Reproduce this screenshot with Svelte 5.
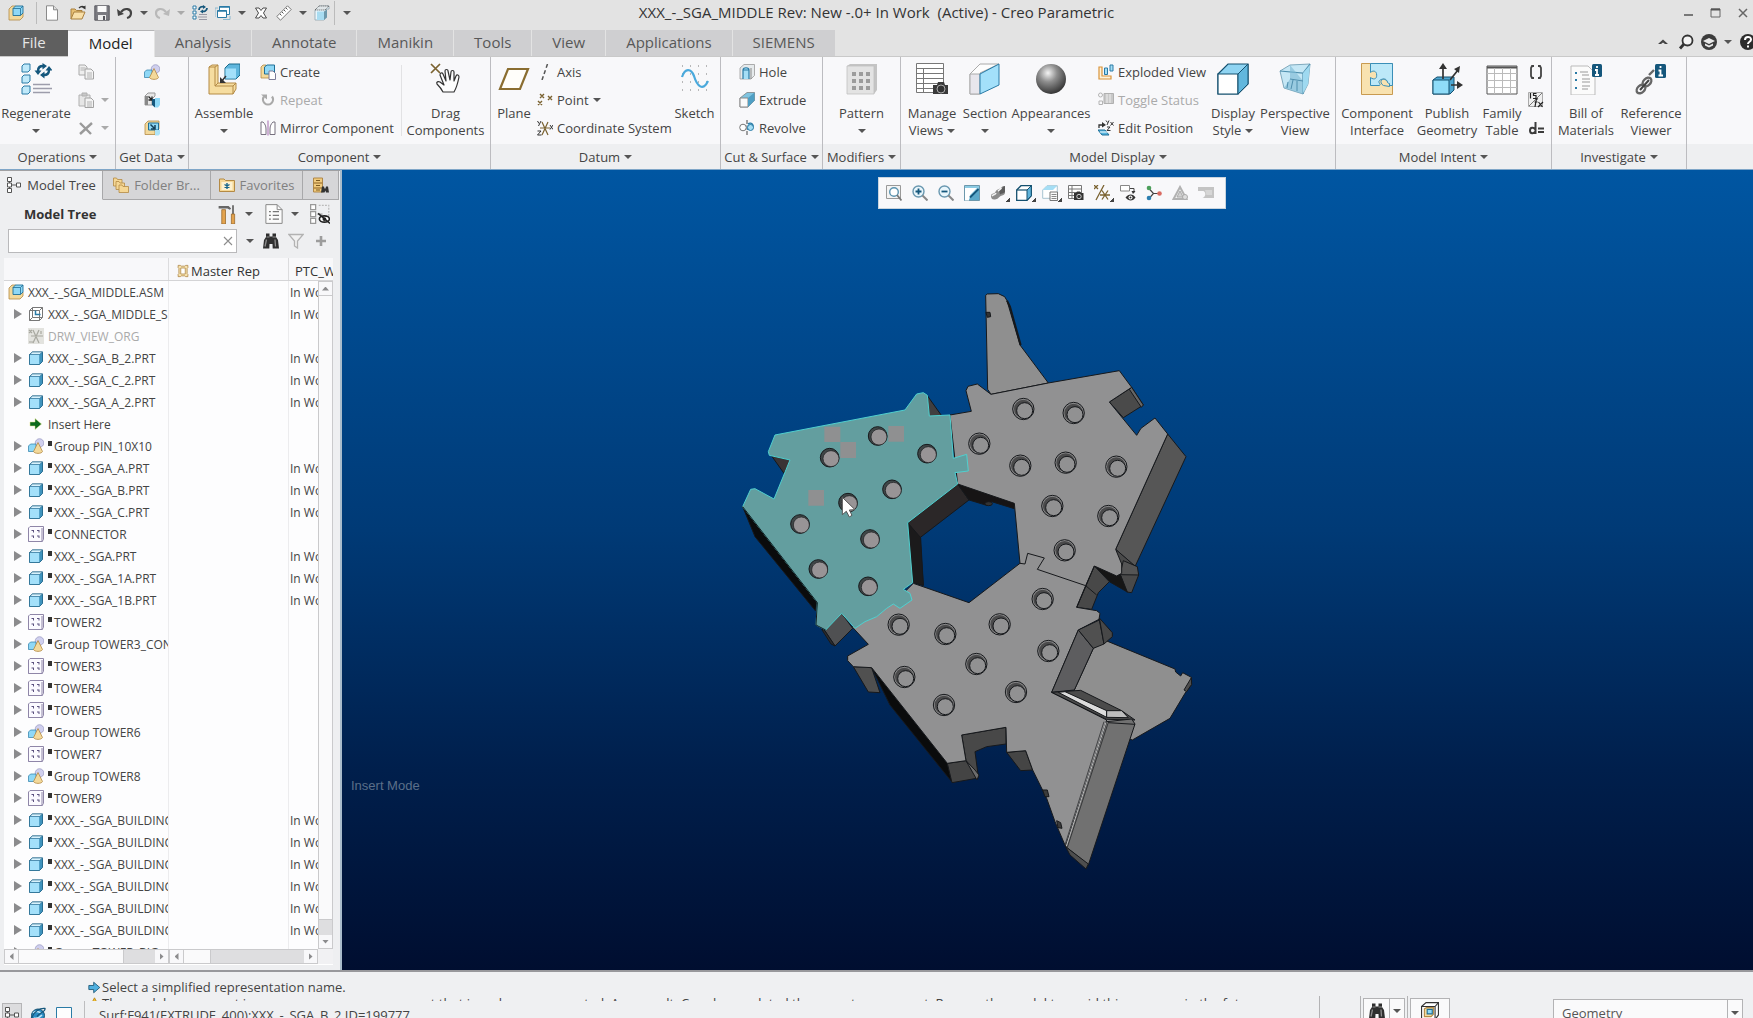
<script>
  /** CAD assembly window: ribbon, model tree, graphics area and status bar. */

  const icons = {
    // quick access + window
    asm: `<path d="M1 4l3-3h4v7h7v4l-3 3H1z" fill="#f3d99b" stroke="#b48a45" stroke-width=".8"/><path d="M5 3.500l2.500-2.500H15v7l-2.500 2.500H5z" fill="#8fd8f6" stroke="#1f6f97" stroke-width=".9"/><path d="M5 3.500h7.500V10.500M12.500 3.500L15 1" fill="none" stroke="#1f6f97" stroke-width=".8"/>`,
    newfile: `<path d="M2.500 .8h7l4 4v10.400h-11z" fill="#fff" stroke="#8b8b8b"/><path d="M9.500 .8v4h4" fill="#ddd" stroke="#8b8b8b"/>`,
    open: `<path d="M1 14V4h4l1.500 1.500H12V8" fill="#e7bf73" stroke="#a9803f"/><path d="M1 14l3-7h11l-3 7z" fill="#f8dfa8" stroke="#a9803f"/><path d="M9 3c2-2 3-2 5-1" fill="none" stroke="#333" stroke-width="1.300"/><path d="M15.500 .5v4l-3.500-2z" fill="#333"/>`,
    save: `<path d="M.8.8h14.400v14.400H.8z" fill="#7a7a80" stroke="#5c5c62"/><path d="M3.500 1h9v6h-9z" fill="#fafafa"/><path d="M4 10h8v5H4z" fill="#ededed"/><path d="M9 11h2v4H9z" fill="#55555c"/>`,
    undo: `<path d="M4 7c4-5 10-3 10 1 0 3-2 4.500-4 5" fill="none" stroke="#444" stroke-width="2.200"/><path d="M0 4l1 7 6-2z" fill="#444"/>`,
    redo: `<path d="M12 7C8 2 2 4 2 8c0 3 2 4.500 4 5" fill="none" stroke="#b9b9b9" stroke-width="2.200"/><path d="M16 4l-1 7-6-2z" fill="#b9b9b9"/>`,
    regenSmall: `<g fill="#fff" stroke="#2a7ba6"><path d="M1 1h3v3H1zM1 6h3v3H1zM1 11h3v3H1z"/></g><path d="M7 9.500h8M6 12h9M7 14.500h8" stroke="#9797a3"/><path d="M7 5c0-3 3-4 5-3M15 3c0 3-3 4-5 3" fill="none" stroke="#15577c" stroke-width="1.800"/><path d="M11 0l3 2-3 2zM11 4.500l-3 2 3 2z" fill="#15577c"/>`,
    windows: `<path d="M4.500 1.500h10v8h-10z" fill="#fff" stroke="#2a7ba6"/><path d="M2.500 5.500h9v7h-9z" fill="#fff" stroke="#2a7ba6"/><path d="M2.500 6h9M4.500 2h10" stroke="#2a7ba6" stroke-width="1.600"/><path d="M8 14.500h7V11M0 3h3M0 3v9" fill="none" stroke="#8cb8cf"/>`,
    closeWin: `<path d="M2.500 3h3.500l2 2.500L10 3h3.500L10.500 8l3 5H10l-2-2.500L6 13H2.500l3-5z" fill="#fff" stroke="#4a4a4a"/>`,
    ruler: `<path d="M.8 11.500L11.500.8l3.700 3.700L4.500 15.200z" fill="#fff" stroke="#777"/><path d="M4 9l1.500 1.500M6 7l1.500 1.500M8 5l1.500 1.500M10 3l1.500 1.500" stroke="#555"/>`,
    cubeDark: `<path d="M1 5l4-4h10v3h-3v7l-2 4H1z" fill="#e9f6fc" stroke="#8fa3ad" stroke-width=".8"/><path d="M1 5l4-4h10l-4 4z" fill="#dfe5e8" stroke="#555" stroke-dasharray="1"/><path d="M3 6.500h7V15H3z" fill="#a8dcf1"/><path d="M10 6.500l3-2v8L10 15z" fill="#6d98ab"/>`,
    min: `<path d="M3 10h9" stroke="#555" stroke-width="1.500"/>`,
    max: `<path d="M3 4h9v8H3z" fill="none" stroke="#666"/><path d="M3 4.500h9" stroke="#555" stroke-width="2"/>`,
    close: `<path d="M4 4l8 8M12 4l-8 8" stroke="#666" stroke-width="1.500"/>`,
    chevUp: `<path d="M3 10l5-4.500L13 10h-3L8 8.500 6 10z" fill="#444"/>`,
    search: `<circle cx="9.500" cy="6.500" r="5" fill="#f4f4f4" stroke="#333" stroke-width="1.800"/><path d="M6 10l-4 4.500" stroke="#333" stroke-width="2.800"/>`,
    learn: `<circle cx="8" cy="8" r="8" fill="#3c3c3c"/><path d="M2 7l6-3 6 3-6 3z" fill="#e8e8e8"/><path d="M4 9.500l4 2 4-2v2l-4 2-4-2z" fill="#e8e8e8"/>`,
    help: `<circle cx="8" cy="8" r="8" fill="#2c2c2c"/><path d="M5 6c0-4 6-4 6-.5 0 2.500-3 2-3 4.500M8 11.500v2" fill="none" stroke="#fff" stroke-width="2"/>`,
    // small ribbon icons
    copy: `<path d="M1 1h6l2 2v8H1z" fill="#eee" stroke="#aaa"/><path d="M7 5h6l2.500 2.500V15H7z" fill="#f3f3f3" stroke="#a2a2a2"/><path d="M2.500 4h5M2.500 6h4M9 9h5M9 11h5M9 13h5" stroke="#b2b2b2"/>`,
    paste: `<path d="M1 3h11v11H1z" fill="#e6e6e6" stroke="#b0b0b0"/><path d="M4 1h5v3H4z" fill="#c8c8c8" stroke="#b0b0b0"/><path d="M7 6h6l2.500 2.500V15.500H7z" fill="#f3f3f3" stroke="#a2a2a2"/><path d="M9 10h5M9 12h5M9 14h5" stroke="#b2b2b2"/>`,
    del: `<path d="M2 3l11 11M14 3L2 14" stroke="#9a9a9a" stroke-width="2.400"/>`,
    group: `<circle cx="11.500" cy="5" r="4.300" fill="#cfcfee" stroke="#8c8cb8" stroke-width=".6"/><path d="M.5 8l2-2H8v6l-1.500 1.500h-6z" fill="#8fd8f6" stroke="#2a7ba6" stroke-width=".7"/><path d="M10 4.500l4.500 9c-1 2.500-8 2.500-9 0z" fill="#f3d99b" stroke="#b48a45" stroke-width=".8"/>`,
    copyGeom: `<path d="M1 4l3-3h7v3l-3 3v6H1z" fill="#e6e6e6" stroke="#999"/><path d="M1 4h3v9H1z" fill="#888"/><path d="M4.500 4.500l3 3M8 4.500v3.500H4.500" fill="none" stroke="#222" stroke-width="1.300"/><path d="M8 7h3v8.500L8 13z" fill="#15577c"/><path d="M11 6h5v7l-2 2.500h-3z" fill="#8fd8f6"/>`,
    shrink: `<path d="M1 4l3-3h11v8h-4v5.500H1z" fill="#f3d99b" stroke="#b48a45" stroke-width=".8"/><path d="M4.500 3h10v7h-10z" fill="#8fd8f6" stroke="#1f6f97"/><path d="M6.500 4.500l4 4M11 5v4H7" fill="none" stroke="#143f58" stroke-width="1.500"/><path d="M11 10h5v4l-1.500 1.500H11z" fill="#aee3f7"/>`,
    create: `<path d="M1 3l2-2h3v7h7v4l-2 2H1z" fill="#f3d99b" stroke="#b48a45" stroke-width=".8"/><path d="M4.500 3L7 1h7.500v7L12 10H4.500z" fill="#8fd8f6" stroke="#1f6f97"/><path d="M9 7h4l2.500 2.500v6H9z" fill="#fff" stroke="#7d7d99"/>`,
    repeat: `<path d="M12 4.500a5 5 0 1 1-8 0" fill="none" stroke="#a9a9a9" stroke-width="2.200"/><path d="M1 2.500h6v5z" fill="#a9a9a9"/>`,
    mirror: `<path d="M1 14.500V2h2c2 2 3 4 3 7v5.500zM15 14.500V2h-2c-2 2-3 4-3 7v5.500z" fill="#fff" stroke="#77707f"/><path d="M8 .5v15" stroke="#a56bb0"/>`,
    axis: `<path d="M10.500 0L5 16" stroke="#555" stroke-width="1.500" stroke-dasharray="4 2.500"/>`,
    point: `<g stroke="#7a6230" stroke-width="1.400"><path d="M3 2l4 4M7 2L3 6M11 4l4 4M15 4l-4 4M1 9l4 4M5 9l-4 4"/></g>`,
    csys: `<path d="M3 8h10M5 15l6-13M5 2l6 13" stroke="#7a6230" stroke-width="1.200"/><path d="M.5 1l1.500 2.500M4 1L1.500 6M13 5l3 4.500M16 5l-3 4.500M.5 11h3.500l-3.500 4h4" fill="none" stroke="#333"/>`,
    hole: `<path d="M1 4l4-3.500h10.500v11L12 15H1z" fill="#e6eaec" stroke="#999" stroke-width=".8"/><path d="M4 15V6c0-3 6-3 6 0v9M4 6h6" fill="#a5def5" stroke="#2a7ba6" stroke-width="1.200"/><path d="M12 4v11" stroke="#888"/>`,
    extrude: `<path d="M1 6l7-5.500h7.500v8L9 15H1z" fill="#7fc4e0" stroke="#777" stroke-width=".7"/><path d="M1 6h8v9H1z" fill="#fafafa" stroke="#888"/><path d="M9 6l6.500-5.500v8L9 15z" fill="#4f9fc4"/>`,
    revolve: `<path d="M8 0v16" stroke="#444" stroke-dasharray="4 1.500"/><ellipse cx="4" cy="7.500" rx="3.300" ry="3.300" fill="#fff" stroke="#777"/><path d="M8 9h4a3 3 0 1 0-3-5" fill="#8fd8f6" stroke="#2a7ba6" stroke-width="1.400"/><circle cx="11.500" cy="7.500" r="3" fill="#a5def5" stroke="#2a7ba6"/>`,
    exploded: `<path d="M1 3h3v9h9v3H1z" fill="#fff3da" stroke="#d9943a" stroke-width="1.200"/><path d="M6.500 4h3v6.500h-3zM12 1h3v6h-3z" fill="#a5def5" stroke="#2a7ba6"/>`,
    toggle: `<circle cx="2.500" cy="3" r="2" fill="none" stroke="#b4b4b4"/><path d="M1 9h3.500v3.500H1z" fill="none" stroke="#b4b4b4"/><path d="M6 1.500h9.500v10H6z" fill="#c8c8c8" stroke="#b0b0b0"/><path d="M9 2v9M12 2v9" stroke="#eee"/>`,
    editpos: `<path d="M1 8V5h4" fill="none" stroke="#333" stroke-width="1.300"/><path d="M4 2l4 3-4 2.500z" fill="#333"/><path d="M8 .5l1.500 2M11 .5L9 5M12.500 2l3 3.500M15.500 2l-3 3.500M9 7h3l-3 3.500h3.500" fill="none" stroke="#333"/><path d="M0 10h7l4 5H4z" fill="#55b4de" stroke="#1f6f97"/><path d="M2 12h8" stroke="#fff"/>`,
    braces: `<path d="M6 2H4L3 4v8l1 2h2M10 2h2l1 2v8l-1 2h-2" fill="none" stroke="#444" stroke-width="1.800"/>`,
    relations: `<path d="M.5.5h14v14H.5z" fill="#efefef" stroke="#aaa"/><path d="M1 14L14 1" stroke="#777"/><path d="M2.500 1v5.500M8.500 1.500H5.500v2h2.500v3H5M10 7c-2-1-2 2-3 8M6.500 10h3M10.500 10l4 5M15 10l-5 5" fill="none" stroke="#222" stroke-width="1.200"/>`,
    params: `<path d="M7.500 2v12M7 9.500c-1-2.500-5-2.500-5 1s4 3.500 5 1M10 8.500h6M10 12h6" fill="none" stroke="#3c3c3c" stroke-width="2"/>`,
    // tree
    prt: `<path d="M1.500 4.500l3-2.500h10v9.500l-3 3h-10z" fill="#3f93bd" stroke="#1c6288" stroke-width=".9"/><path d="M1.500 4.500l3-2.500h10l-3 2.500z" fill="#d9f2fc" stroke="#1c6288" stroke-width=".6"/><path d="M1.900 4.900h9.300v9.200H1.900z" fill="#a3e0fa"/>`,
    skel: `<path d="M1.500 4.500l3-3h10v10l-3 3h-10zM4.500 1.500v10h10M1.500 14.500l3-3M11.500 4.500l3-3M1.500 4.500h10v10" fill="#fff" stroke="#777"/><path d="M7.500 4.500v4h5" fill="none" stroke="#2a7ba6" stroke-width="1.500"/>`,
    csysGrey: `<path d="M0 0h16v16H0z" fill="#e3e3df"/><path d="M3 8h12M5 15l6-13M5 2l6 13M1 2l3 3M4 2l-3 3M13 3v3M1 14h4" stroke="#a8a8a0" stroke-width="1.200"/>`,
    insert: `<path d="M2 6h5V2.500L13.500 8 7 13.500V10H2z" fill="#0d6b1d" stroke="#e5e58a" stroke-width=".5"/>`,
    patt: `<path d="M.5 2L2 .5h13.500v13L14 15.500H.5z" fill="#fbfaff" stroke="#8f86a8"/><path d="M14 2v13.500M.5 15.500h14" stroke="#8f86a8"/><g fill="#5c5280"><path d="M3.500 4h2.500v2.500H5V5H3.500zM9 4h2.500v2.500h-1V5H9zM3.500 9.500H6V12H5v-1.500H3.500zM9 9.500h2.500V12h-1v-1.500H9z"/></g>`,
    treeTab: `<path d="M1.500 .5h4v4h-4zM1.500 6h4v4h-4zM1.500 11.500h4v4h-4zM10.500 6h4v4h-4z" fill="#fff" stroke="#555"/><path d="M6 8h4M3.500 4.500V6M3.500 10v1.500" stroke="#555"/>`,
    folders: `<g fill="#f5d795" stroke="#b48a45" stroke-width=".8"><path d="M.5 9V1h3l1 1.500H9V9z"/><path d="M3 12.500V4.500h3l1 1.500h4.500v6.500z"/><path d="M6 15.500V8h3l1 1.500h5.500v6z"/></g>`,
    fav: `<path d="M.5 14.500V2h4.500l1.500 1.500h9v11z" fill="#f5d795" stroke="#b48a45"/><path d="M2.500 5h11v8h-11z" fill="#fdf1d0"/><path d="M8 6v6M5.500 7.500l5 3M10.500 7.500l-5 3" stroke="#14648c" stroke-width="1.400"/>`,
    findTab: `<path d="M.5 1h9v5h-9zM.5 6h9v5h-9zM.5 11h9v4h-9z" fill="#f0ca7c" stroke="#a9803f" stroke-width=".9"/><path d="M3 3.500h4M3 8.500h4M3 13h4" stroke="#7d5a20"/><path d="M8 15.500l1-6h2l.5 2h1l.5-2h2l1 6h-3l-.5-2-1 2z" fill="#333"/>`,
    tools: `<path d="M.5 1.500h8l2 2-1 1-2-1H.5z" fill="#666"/><path d="M3 4.500h3V16H3z" fill="#e3a34e" stroke="#96672a" stroke-width=".6"/><path d="M12 1v7" stroke="#777" stroke-width="1.600"/><path d="M10.700 8h2.600v8h-2.600z" fill="#e3a34e" stroke="#96672a" stroke-width=".6"/>`,
    sheet: `<path d="M1.500 .5h9l4 4v11h-13z" fill="#fbfbfb" stroke="#8a8a8a" stroke-width=".8"/><path d="M10.500 .5v4h4" fill="none" stroke="#8a8a8a" stroke-width=".8"/><path d="M4 6h1.500M4 9h1.500M4 12h1.500M7 6h5M7 9h5M7 12h5" stroke="#777"/>`,
    hideTree: `<path d="M.5.5h4v4h-4zM.5 6h4v4h-4zM.5 11.500h4v4h-4zM6 8h4" fill="#fff" stroke="#999"/><path d="M7 1h8v9" fill="none" stroke="#bbb" stroke-dasharray="1.500 1"/><ellipse cx="11.500" cy="12" rx="4" ry="2.500" fill="#fff" stroke="#222" stroke-width="1.300"/><circle cx="11.500" cy="12" r="1.500" fill="#222"/><path d="M6.500 7.500l9.500 8" stroke="#222" stroke-width="1.200"/>`,
    binoc: `<path d="M3 .5h3.500v3h3v-3H13V4l2 3 1 8.500h-6.300L9.500 11h-3l-.2 4.500H0L1 7l2-3z" fill="#2f2f2f"/><path d="M3.500 6.500L2 13.500M12 6.500l.5 7" stroke="#8d8d8d" stroke-width="1.300"/><path d="M3.500 4h3M9.500 4H13" stroke="#aaa" stroke-width=".8"/>`,
    funnel: `<path d="M.8 1.500h14.400L9.500 8v7l-3-2V8z" fill="#f1f1f1" stroke="#b2b2b2" stroke-width="1.300"/>`,
    plus: `<path d="M8 3v10M3 8h10" stroke="#9c9c9c" stroke-width="2.600"/>`,
    x: `<path d="M4 4l8 8M12 4l-8 8" stroke="#8d8d8d" stroke-width="1.100"/>`,
    rep: `<path d="M1.500 .5h3l1 1h5l1-1h3v3l-1 1v7l1 1v3h-3l-1-1h-5l-1 1h-3v-3l1-1v-7l-1-1z" fill="#f7e2ae" stroke="#a9803f"/><path d="M5 4h6v8H5z" fill="#fff" stroke="#a9803f"/>`,
    // graphics toolbar
    refit: `<path d="M.5.5h14v13H.5z" fill="#f4f4f4" stroke="#999"/><circle cx="8" cy="7" r="4.300" fill="#fff" stroke="#5a93b0" stroke-width="1.400"/><path d="M11 10l4.500 5.500" stroke="#777" stroke-width="1.800"/>`,
    zoomIn: `<circle cx="6.500" cy="6.500" r="5.500" fill="#e9f6fc" stroke="#6a98b0" stroke-width="1.400"/><path d="M3.500 6.500h6M6.500 3.500v6" stroke="#15577c" stroke-width="1.800"/><path d="M10.500 10.500l5 5" stroke="#888" stroke-width="2"/>`,
    zoomOut: `<circle cx="6.500" cy="6.500" r="5.500" fill="#e9f6fc" stroke="#6a98b0" stroke-width="1.400"/><path d="M3.500 6.500h6" stroke="#15577c" stroke-width="1.800"/><path d="M10.500 10.500l5 5" stroke="#888" stroke-width="2"/>`,
    repaint: `<path d="M.5 .5h15v15H.5z" fill="#8ccbe3" stroke="#6d98ac"/><path d="M1 3h12L6 10l-1 5.500H1z" fill="#fff"/><path d="M15 3c-3 7-6 5-10 12h10z" fill="#5ba8c9"/><path d="M14.500 4L6 12.500" stroke="#15577c" stroke-width="1.800"/>`,
    shade: `<path d="M1 11c0-3 3-2 4-3.500S6 5 9 4s2-3 6-3v7c-1 3-3 2-5 3.500S8 14 5 14.500 1 13 1 11z" fill="#8c8c8c"/><path d="M9 5c3-.5 3-3 6-4v6c-2 2-3 1-5 2.500z" fill="#5c5c5c"/><path d="M2 11c2-2 3-1 4-3M8 6c2-1 2-2 3.500-3" stroke="#f2f2f2" stroke-width="1.600" fill="none"/>`,
    cube: `<path d="M.7 5L5 .7h10.300v10L11 15.300H.7z" fill="#fff" stroke="#14506f" stroke-width="1.300"/><path d="M11 5L15.300.7v10L11 15.300z" fill="#5fb3da" stroke="#14506f"/><path d="M.7 5H11" stroke="#14506f" stroke-width="1.200"/>`,
    saved: `<path d="M.7 5L5 .7h10.300v8L11 13.300H.7z" fill="#fff" stroke="#a8c4d0"/><path d="M.7 5L5 .7h10.300L11 5z" fill="#a5def5"/><path d="M8 7h7.500v8.500H8z" fill="#fafafa" stroke="#777"/><path d="M9.500 9.500h5M9.500 11.500h5M9.500 13.500h5" stroke="#888"/>`,
    viewMgr: `<path d="M.5.5h13v13H.5zM.5 4h13M.5 7.500h13M.5 10.500h13M4 .5v13" fill="#fff" stroke="#777"/><path d="M6 8h2l1-1.500h3L13 8h2.500v7H6z" fill="#333"/><circle cx="11" cy="11.500" r="2.200" fill="#333" stroke="#ccc"/>`,
    datums: `<g stroke="#7a6230" stroke-width="1.300"><path d="M0 0l4 4M4 0L0 4M10 0L2 15M6 10h10M8 14.500l6-9M8 5.500l6 9"/></g>`,
    annot: `<path d="M.5 .5h9v5.500h-9z" fill="#fff" stroke="#888"/><path d="M10 3.500h4v4" fill="none" stroke="#444"/><path d="M11.500 6h4L13 9z" fill="#333"/><path d="M5.500 12.500c3-4 7.500-4 10 0-2.500 4-7 4-10 0z" fill="#333"/><circle cx="10.500" cy="12.500" r="2" fill="#fff"/><circle cx="10.500" cy="12.500" r="1" fill="#333"/>`,
    spin: `<path d="M2.500 3l5 5.500L3 13.500M7.500 8.500h6" fill="none" stroke="#444" stroke-width="1.200"/><circle cx="3" cy="3" r="2.300" fill="#4c9f5b"/><circle cx="3" cy="13" r="2.300" fill="#2c7fb0"/><circle cx="13.500" cy="8.500" r="2.300" fill="#d96a62"/>`,
    tri: `<path d="M8 2l6.500 12H1.500z" fill="#eee" stroke="#b2b2b2" stroke-width="2"/><path d="M8 6l3 6H5z" fill="#d2d2d2" stroke="#aaa"/><circle cx="13" cy="12" r="2.500" fill="#ddd" stroke="#aaa"/>`,
    flag: `<path d="M0 2h16v11H4.500c3-1 4-5 1-7H0z" fill="#c4c4c4"/><path d="M7 5h7v5H8.500z" fill="#d6d6d6"/>`,
    // status
    arrow: `<path d="M1 5.500h6V1.500L14.500 8 7 14.500v-4H1z" fill="#4fb0e0" stroke="#14506f"/>`,
    warn: `<path d="M8 1l7.500 14H.5z" fill="#f6c42c" stroke="#b27d10"/><path d="M8 5v5M8 11.500V13" stroke="#222" stroke-width="1.600"/>`,
    globe: `<circle cx="8" cy="8.500" r="6.500" fill="#2a8cc4" stroke="#14506f"/><path d="M3 6c3-3 6-1 8 0M4 11c3 1 5 0 8-3" fill="none" stroke="#bfe6f8" stroke-width="1.500"/><path d="M1 12C4 4 10 1 15 1.500c1 3-4 3-8 8" fill="none" stroke="#15577c" stroke-width="1.300"/>`,
    blank: `<path d="M.5.5h15v13H.5z" fill="#fdfdfd" stroke="#2a7ba6"/>`,
    box3d: `<path d="M.5 4l4-3.500h11v11l-3 4H.5z" fill="#fff" stroke="#333"/><path d="M.5 4h12v11M12.500 4l3-3.500" fill="none" stroke="#333"/><path d="M3 6l2-1h6v6l-2 2H3z" fill="#f3d99b" stroke="#b48a45"/><path d="M5.500 6.500h4.500v4H5.500z" fill="#8fd8f6" stroke="#1f6f97"/>`,
  };

  const bigIcons = {
    regen: `<g fill="#bfe9fa" stroke="#2a7ba6"><path d="M2 3l2-2h6v6L8 9H2zM2 14l2-2h6v6l-2 2H2zM2 25l2-2h6v6l-2 2H2z"/></g><path d="M13 21.500h17M13 25.500h19M13 29.500h17" stroke="#9d9dab" stroke-width="1.500"/><path d="M18 8c0-4 2-5 5-5M29 7c0 4-2 5-5 5" fill="none" stroke="#15577c" stroke-width="2.400"/><path d="M22.500 0l4.500 3-4.500 3.500zM24.500 8.500L20 12l4.500 3.500z" fill="#15577c"/><path d="M14.500 7.500h7L18 12zM25.500 7.500h7L29 3z" fill="#15577c"/>`,
    assemble: `<path d="M1 4l3-2h6v18h14l4 0v6l-3 5H1z" fill="#f6dda0" stroke="#b48a45"/><path d="M1 4h6v19h18v8M7 4l3-2M7 23l3-3M25 23l3-3" fill="none" stroke="#b48a45"/><path d="M17 5l4-4h11v11l-4 4H17z" fill="#5fb6dd" stroke="#1c6b8c"/><path d="M17.500 5.500H28v10H17.500z" fill="#a3e0fa"/><path d="M18 13l-5 6" stroke="#333" stroke-width="1.400"/><path d="M12 14v6h6z" fill="#333"/>`,
    drag: `<path d="M1 1l9 9M10 1l-9 9" stroke="#7a6230" stroke-width="1.700"/><path d="M13 29c-2-4-4-6-6-8-1-2 1-3 3-2l4 3-4-10c0-2 2-3 3-1l3 7-1-10c0-2 3-2 3 0l2 9 1-8c0-2 3-2 3 0v9l2-5c1-2 3-1 3 1-1 5-2 10-5 15z" fill="#fdfdfd" stroke="#333" stroke-width="1.200" stroke-linejoin="round"/>`,
    plane: `<path d="M10 6h20l-8 20H2z" fill="#fffefa" stroke="#8a6d30" stroke-width="2.200"/>`,
    sketch: `<path d="M3 3h26M3 11h26M3 19h26M3 27h26" stroke="#777" stroke-dasharray="1 7"/><path d="M3 14c3-9 9-9 12-1 3 10 9 16 14 5" fill="none" stroke="#4aa9dc" stroke-width="2.200"/>`,
    pattern: `<path d="M1 3l3-2h27v26l-3 4H1z" fill="#c4c4c4"/><path d="M1 3h27v28H1z" fill="#e3e3e3" stroke="#c0c0c0" stroke-width=".8"/><g fill="#9c9c9c"><path d="M6 9h4v4H6zM13 9h4v4h-4zM20 9h4v4h-4zM6 16h4v4H6zM13 16h4v4h-4zM20 16h4v4h-4zM6 23h4v4H6zM13 23h4v4h-4zM20 23h4v4h-4z"/></g>`,
    manage: `<path d="M.5 .5h27v29H.5zM.5 5.500h27M.5 10.500h27M.5 15.500h27M.5 20.500h27M.5 25.500h27M7.500 5v25" fill="#fff" stroke="#777"/><path d="M17 22h4l1-3h6l1 3h3v9H17z" fill="#3a3a3a"/><circle cx="25" cy="26" r="4" fill="#333" stroke="#aaa"/>`,
    section: `<path d="M1 11l10-10h19l-19 9v21H1z" fill="#fdfdfd" stroke="#aaa"/><path d="M1 11h10v20H1z" fill="#e8e6ec" stroke="#aaa"/><path d="M11 11l19-10v21L11 31z" fill="#a3e0fa" stroke="#2a7ba6"/>`,
    appear: `<circle cx="16" cy="16" r="15" fill="url(#ball)"/>`,
    display: `<path d="M1 11L11 1h20v20L21 31H1z" fill="#8fd4f2" stroke="#14506f" stroke-width="1.200"/><path d="M1 11h20v20H1z" fill="#fff" stroke="#14506f" stroke-width="1.200"/><path d="M21 11L31 1v20L21 31z" fill="#62b7dd" stroke="#14506f"/>`,
    persp: `<path d="M1 8l10-6 20-1-2 20-5 10-19-6z" fill="#c5e7f5" stroke="#7fa9bd"/><path d="M1 8l23 2 7-9M24 10v21" fill="none" stroke="#4f8fae" stroke-width="1.200"/><path d="M11 2v14L5 25l19 6V18z" fill="#7cb9d3" opacity=".6"/><path d="M24 10l7-8-2 19-5 9z" fill="#9ed9f0"/><path d="M11 16l13 2M9 19l-1 6M14 17l-2 9M18 18v10" stroke="#4f8fae"/>`,
    iface: `<path d="M.5.500h31v31H.5z" fill="#f8e2b0" stroke="#c89a50"/><path d="M9.500.5h22v22h-5c1-7-4-8-8-5-2 2 2 4 0 5h-9v-8c4 3 7 1 6-4-1-3-4-3-6-1z" fill="#bce8f8" stroke="#3a8fb8"/><path d="M22.500 22.500c-4-2-3-7 1-6s2 4 5 4v3z" fill="#f8e2b0" stroke="#3a8fb8"/>`,
    publish: `<path d="M2 17l4-3h17v13l-4 4H2z" fill="#4fa8d2" stroke="#14506f"/><path d="M2 17h16v14H2z" fill="#8fdcf8" stroke="#14506f"/><path d="M12 16V4M19 17l8-10M20 22h9" stroke="#333" stroke-width="1.700"/><path d="M12 0l4 6H8zM29 3l-1 7-5-4zM32 22l-6 4v-8z" fill="#333"/>`,
    family: `<path d="M1 3h30v28H1z" fill="#fff" stroke="#555"/><path d="M1 4.500h30" stroke="#555" stroke-width="2"/><path d="M1 10.500h30M1 17.500h30M1 24.500h30M8.500 5v26M16.500 5v26M24.500 5v26" stroke="#bbb"/>`,
    bom: `<path d="M1 3h17l7 7v22H1z" fill="#fbfbfb" stroke="#bbb"/><path d="M5 10h2M5 17h2M5 25h2" stroke="#2a7ba6" stroke-width="2"/><path d="M10 9h8M12 12h7M12 16h8M12 19h8M12 23h8M12 26h6" stroke="#999"/><rect x="22" y="1" width="10" height="13" rx="1.500" fill="#15577c"/><path d="M27 3v2M25 7h2v5M25 12h4" fill="none" stroke="#fff" stroke-width="1.800"/>`,
    refview: `<g fill="none" stroke="#666" stroke-width="2.400"><ellipse cx="6" cy="26" rx="5" ry="3.500" transform="rotate(-45 6 26)"/><ellipse cx="12" cy="19" rx="5" ry="3.500" transform="rotate(-45 12 19)"/><path d="M14 12l5-5"/></g><path d="M5 27l9-10" stroke="#444" stroke-width="2"/><rect x="20" y="1" width="11" height="14" rx="1.500" fill="#15577c"/><path d="M25.500 3v2M23.500 7.500h2v5M23.500 12.500h4.500" fill="none" stroke="#fff" stroke-width="1.800"/>`,
  };

  const quick = [
    { icon: "newfile", label: "New" },
    { icon: "open", label: "Open" },
    { icon: "save", label: "Save" },
    { icon: "undo", label: "Undo", menu: true },
    { icon: "redo", label: "Redo", menu: true, off: true },
    { icon: "regenSmall", label: "Regenerate" },
    { icon: "windows", label: "Windows", menu: true },
    { icon: "closeWin", label: "Close window" },
    { icon: "ruler", label: "Measure", menu: true },
    { icon: "cubeDark", label: "Display" },
  ];

  const tabs = ["File", "Model", "Analysis", "Annotate", "Manikin", "Tools", "View", "Applications", "SIEMENS"];

  // each group body is a row of big buttons ({big}) and stacks of small ones ({list})
  const groups = [
    {
      name: "Operations",
      cls: "operations",
      items: [
        { big: "regen", lines: ["Regenerate"], menu: true },
        {
          list: [
            { icon: "copy", title: "Copy", off: true },
            { icon: "paste", title: "Paste", menu: true, off: true },
            { icon: "del", title: "Delete", menu: true, off: true },
          ],
        },
      ],
    },
    {
      name: "Get Data",
      cls: "get-data",
      items: [
        {
          list: [
            { icon: "group", title: "User-Defined Feature" },
            { icon: "copyGeom", title: "Copy Geometry" },
            { icon: "shrink", title: "Shrinkwrap" },
          ],
        },
      ],
    },
    {
      name: "Component",
      cls: "component",
      items: [
        { big: "assemble", lines: ["Assemble"], menu: true },
        {
          list: [
            { icon: "create", text: "Create" },
            { icon: "repeat", text: "Repeat", off: true },
            { icon: "mirror", text: "Mirror Component" },
          ],
        },
        { big: "drag", lines: ["Drag", "Components"], ruled: true },
      ],
    },
    {
      name: "Datum",
      cls: "datum",
      items: [
        { big: "plane", lines: ["Plane"] },
        {
          list: [
            { icon: "axis", text: "Axis" },
            { icon: "point", text: "Point", menu: true },
            { icon: "csys", text: "Coordinate System" },
          ],
        },
        { big: "sketch", lines: ["Sketch"] },
      ],
    },
    {
      name: "Cut & Surface",
      cls: "cut",
      items: [
        {
          list: [
            { icon: "hole", text: "Hole" },
            { icon: "extrude", text: "Extrude" },
            { icon: "revolve", text: "Revolve" },
          ],
        },
      ],
    },
    { name: "Modifiers", cls: "modifiers", items: [{ big: "pattern", lines: ["Pattern"], menu: true }] },
    {
      name: "Model Display",
      cls: "model-display",
      items: [
        { big: "manage", lines: ["Manage", "Views"], menu: true },
        { big: "section", lines: ["Section"], menu: true },
        { big: "appear", lines: ["Appearances"], menu: true },
        {
          list: [
            { icon: "exploded", text: "Exploded View" },
            { icon: "toggle", text: "Toggle Status", off: true },
            { icon: "editpos", text: "Edit Position" },
          ],
        },
        { big: "display", lines: ["Display", "Style"], menu: true },
        { big: "persp", lines: ["Perspective", "View"] },
      ],
    },
    {
      name: "Model Intent",
      cls: "intent",
      items: [
        { big: "iface", lines: ["Component", "Interface"] },
        { big: "publish", lines: ["Publish", "Geometry"] },
        { big: "family", lines: ["Family", "Table"] },
        {
          list: [
            { icon: "braces", title: "Parameters" },
            { icon: "relations", title: "Relations" },
            { icon: "params", title: "Switch Dimensions" },
          ],
        },
      ],
    },
    {
      name: "Investigate",
      cls: "investigate",
      items: [
        { big: "bom", lines: ["Bill of", "Materials"] },
        { big: "refview", lines: ["Reference", "Viewer"] },
      ],
    },
  ];

  const part = (name, mark = true) => ({ name, icon: "prt", mark, work: true });
  const patt = (name) => ({ name, icon: "patt", mark: true });
  const grp = (name) => ({ name: `Group ${name}`, icon: "group", mark: true });

  const rows = [
    { name: "XXX_-_SGA_MIDDLE.ASM", icon: "asm", root: true, work: true },
    { name: "XXX_-_SGA_MIDDLE_SKEL.PRT", icon: "skel", work: true },
    { name: "DRW_VIEW_ORG", icon: "csysGrey", leaf: true, off: true },
    part("XXX_-_SGA_B_2.PRT", false),
    part("XXX_-_SGA_C_2.PRT", false),
    part("XXX_-_SGA_A_2.PRT", false),
    { name: "Insert Here", icon: "insert", leaf: true },
    grp("PIN_10X10"),
    part("XXX_-_SGA_A.PRT"),
    part("XXX_-_SGA_B.PRT"),
    part("XXX_-_SGA_C.PRT"),
    patt("CONNECTOR"),
    part("XXX_-_SGA.PRT"),
    part("XXX_-_SGA_1A.PRT"),
    part("XXX_-_SGA_1B.PRT"),
    patt("TOWER2"),
    grp("TOWER3_CON"),
    patt("TOWER3"),
    patt("TOWER4"),
    patt("TOWER5"),
    grp("TOWER6"),
    patt("TOWER7"),
    grp("TOWER8"),
    patt("TOWER9"),
    ...Array.from({ length: 6 }, () => part("XXX_-_SGA_BUILDING")),
    grp("TOWER_BIG"),
  ];

  const viewTools = [
    ["refit", "Refit"], ["zoomIn", "Zoom In"], ["zoomOut", "Zoom Out"], ["repaint", "Repaint"],
    ["shade", "Rendering", true], ["cube", "Display Style", true], ["saved", "Saved Orientations", true],
    ["viewMgr", "View Manager"], ["datums", "Datum Display", true], ["annot", "Annotation Display"],
    ["spin", "Spin Center"], ["tri", "Simulate"], ["flag", "Pause"],
  ];

  const holes = [
    [880, 387], [1031, 399], [748, 491], [871, 557], [1007, 548], [1159, 560], [967, 678], [1135, 708], [1004, 811],
    [938, 957], [506, 1034], [646, 1062], [809, 1033], [955, 1113], [739, 1152], [523, 1191], [858, 1236], [642, 1275],
  ];
  const pickedHoles = [
    [443, 468], [299, 533], [591, 521], [486, 628], [354, 668], [210, 732], [420, 777], [265, 867], [414, 919],
  ];

  let active = $state("Model");
  let query = $state("");
</script>

{#snippet icon(name)}
  <svg class="ico" viewBox="0 0 16 16" aria-hidden="true">{@html icons[name]}</svg>
{/snippet}

{#snippet caret()}<i class="caret"></i>{/snippet}

<div class="window">
  <header class="titlebar">
    <div class="quick">
      <span class="logo">{@render icon("asm")}</span>
      {#each quick as q}
        <button type="button" class:off={q.off} class:menu={q.menu} aria-label={q.label}>
          {@render icon(q.icon)}
          {#if q.menu}{@render caret()}{/if}
        </button>
      {/each}
      <button type="button" class="more" aria-label="Customize">{@render caret()}</button>
    </div>
    <h1>XXX_-_SGA_MIDDLE Rev: New -.0+ In Work &nbsp;(Active) - Creo Parametric</h1>
    <div class="win-buttons">
      <button type="button" aria-label="Minimize">{@render icon("min")}</button>
      <button type="button" aria-label="Maximize">{@render icon("max")}</button>
      <button type="button" aria-label="Close">{@render icon("close")}</button>
    </div>
  </header>

  <nav class="tabs">
    {#each tabs as tab}
      <button type="button" class:file={tab === "File"} class:active={active === tab} onclick={() => (active = tab)}>{tab}</button>
    {/each}
    <div class="helpers">
      <button type="button" aria-label="Collapse ribbon">{@render icon("chevUp")}</button>
      <button type="button" aria-label="Search">{@render icon("search")}</button>
      <button type="button" class="learn" aria-label="Learning">{@render icon("learn")}{@render caret()}</button>
      <button type="button" aria-label="Help">{@render icon("help")}</button>
    </div>
  </nav>

  <section class="ribbon" aria-label="Ribbon">
    {#each groups as g}
      <div class="group {g.cls}">
        <div class="body">
          {#each g.items as item}
            {#if item.big}
              <button type="button" class="big" class:ruled={item.ruled}>
                <svg viewBox="0 0 32 32" aria-hidden="true">
                  {#if item.big === "appear"}
                    <defs>
                      <radialGradient id="ball" cx=".4" cy=".3" r=".75">
                        <stop offset="0" stop-color="#f4f4f4" />
                        <stop offset=".4" stop-color="#8e8e8e" />
                        <stop offset="1" stop-color="#2c2c2c" />
                      </radialGradient>
                    </defs>
                  {/if}
                  {@html bigIcons[item.big]}
                </svg>
                <span>{item.lines[0]}</span>
                <span>{item.lines[1] ?? ""}{#if item.menu}{@render caret()}{/if}</span>
              </button>
            {:else}
              <div class="list">
                {#each item.list as it}
                  <button type="button" class="small" class:off={it.off} aria-label={it.title}>
                    {@render icon(it.icon)}
                    {#if it.text}<span>{it.text}</span>{/if}
                    {#if it.menu}{@render caret()}{/if}
                  </button>
                {/each}
              </div>
            {/if}
          {/each}
        </div>
        <button type="button" class="group-name">{g.name}{@render caret()}</button>
      </div>
    {/each}
  </section>

  <main>
    <aside>
      <div class="side-tabs">
        <button type="button" class="active">{@render icon("treeTab")}Model Tree</button>
        <button type="button">{@render icon("folders")}Folder Br...</button>
        <button type="button">{@render icon("fav")}Favorites</button>
        <button type="button" aria-label="Search tool">{@render icon("findTab")}</button>
      </div>
      <div class="side-head">
        <h2>Model Tree</h2>
        <button type="button" aria-label="Settings">{@render icon("tools")}{@render caret()}</button>
        <button type="button" aria-label="Show">{@render icon("sheet")}{@render caret()}</button>
        <button type="button" aria-label="Hide tree">{@render icon("hideTree")}</button>
      </div>
      <div class="filter">
        <div class="field">
          <input type="text" aria-label="Filter tree" bind:value={query} />
          <button type="button" aria-label="Clear" onclick={() => (query = "")}>{@render icon("x")}</button>
        </div>
        <button type="button" aria-label="History">{@render caret()}</button>
        <button type="button" aria-label="Find">{@render icon("binoc")}</button>
        <button type="button" aria-label="Filter">{@render icon("funnel")}</button>
        <button type="button" aria-label="Add">{@render icon("plus")}</button>
      </div>
      <div class="tree">
        <div class="tree-clip">
          <table>
            <thead>
              <tr>
                <th aria-label="Name"></th>
                <th>{@render icon("rep")}Master Rep</th>
                <th>PTC_WM</th>
              </tr>
            </thead>
            <tbody>
              {#each rows as row}
                <tr class:off={row.off}>
                  <td>
                    <div class="node" class:root={row.root}>
                      {#if !row.root}
                        <button type="button" class="expander" class:leaf={row.leaf} aria-label="Expand" disabled={row.leaf}></button>
                      {/if}
                      {@render icon(row.icon)}
                      {#if row.mark}<i class="mark"></i>{/if}
                      <span>{row.name}</span>
                    </div>
                  </td>
                  <td></td>
                  <td>{row.work ? "In Work" : ""}</td>
                </tr>
              {/each}
            </tbody>
          </table>
          <div class="vscroll">
            <button type="button" class="arrow up" aria-label="Scroll up"></button>
            <div class="thumb"></div>
            <div class="track"></div>
            <button type="button" class="arrow down" aria-label="Scroll down"></button>
          </div>
        </div>
        <div class="hscrolls">
          <div class="hscroll names">
            <button type="button" class="arrow left" aria-label="Scroll left"></button>
            <div class="thumb"></div>
            <div class="track"></div>
            <button type="button" class="arrow right" aria-label="Scroll right"></button>
          </div>
          <div class="hscroll cols">
            <button type="button" class="arrow left" aria-label="Scroll left"></button>
            <div class="thumb"></div>
            <div class="track"></div>
            <button type="button" class="arrow right" aria-label="Scroll right"></button>
          </div>
        </div>
      </div>
    </aside>

    <section class="graphics" aria-label="Graphics area">
      <div class="view-tools">
        {#each viewTools as [name, label, more]}
          <button type="button" class:more aria-label={label}>{@render icon(name)}</button>
        {/each}
      </div>
      <svg class="scene" viewBox="342 170 1411 800" aria-hidden="true">
        <g transform="translate(730 280) scale(.33333)" stroke="#16181b" stroke-width="3" stroke-linejoin="round">
          <!-- side walls -->
          <g fill="#0a0b0c">
            <path d="M38 680L262 968 256 992 75 770Z" />
            <path d="M425 1163L652 1450 666 1506 480 1275Z" />
            <path d="M125 528L184 540 162 580Z" fill="#3a3435" />
            <path d="M592 347L634 406 592 412Z" fill="#413f40" />
            <path d="M683 612L717 660 570 773 580 916 548 908 533 728Z" fill="#2b2728" />
            <path d="M533 728L572 773 580 916 548 908Z" fill="#1b1a1b" />
            <path d="M683 612L853 668V686L785 665 770 676 717 660Z" fill="#161415" />
          </g>
          <ellipse cx="776" cy="671" rx="11" ry="6" fill="#333" />
          <path d="M1128 1082L1335 1167 1337 1176 1352 1188 1358 1178 1384 1192 1384 1215 1365 1240 1320 1315 1207 1380 1000 1300 1033 1230 1090 1105Z" fill="#8f8f8f" />
          <path d="M1384 1193L1385 1213 1370 1235 1362 1230Z" fill="#4e4e4e" />
          <path d="M1313 462L1368 530 1215 860 1157 808Z" fill="#565656" />
          <path d="M1138 366L1205 322 1240 375 1180 413Z" fill="#4a4a4a" />
          <path d="M1205 322L1240 375 1234 382 1198 328Z" fill="#666" />
          <path d="M1157 808L1215 858 1226 885 1205 938 1190 936 1172 888Z" fill="#4a4a4a" />
          <path d="M1180 842L1222 860 1226 885 1170 884Z" fill="#555" />
          <path d="M1093 858L1172 886 1192 936 1138 905Z" fill="#151515" />
          <path d="M1093 858L1138 905 1105 938 1085 988 1040 982Z" fill="#484848" />
          <path d="M1067 917L1100 945" fill="none" />
          <path d="M335 1000L368 1045 315 1098 283 1050Z" fill="#4f5052" />
          <path d="M283 1050L315 1098 303 1092 275 1048Z" fill="#2c2d2f" />
          <path d="M370 1160L425 1163 450 1238 415 1236Z" fill="#505050" />
          <path d="M652 1450L708 1442 745 1494 666 1508Z" fill="#444" />
          <path d="M695 1365L828 1342V1392L770 1400 735 1415 745 1490 708 1442Z" fill="#484848" />
          <path d="M708 1442L735 1470 747 1485 741 1500Z" fill="#6c6c6c" />
          <path d="M830 1417L887 1412 908 1470 872 1472Z" fill="#454545" />
          <!-- top horn -->
          <path d="M767 46L772 42 805 41 824 50 831 62 870 195 955 309 783 343 773 328Z" fill="#8f8f8f" />
          <path d="M831 62L840 80 872 195" fill="none" stroke-width="6" />
          <path d="M768 97L780 97 782 110 772 112Z" fill="#333" />
          <!-- grey plates -->
          <path
            d="M660 405L724 394 708 332 714 319 742 312 783 343 955 309 1168 272 1205 322 1138 366 1220 466 1233 445 1275 414 1313 462 1157 808 1175 852V880L1160 888 1093 858 1067 917 1040 982 1100 992 1110 1000 1107 1018 1045 1050 965 1237 1130 1320 1007 1700 975 1625 950 1555 908 1470 887 1412 830 1417 828 1342 695 1365 708 1442 652 1450 425 1163 370 1160 353 1142V1128L415 1093 366 1040 500 960 550 910 717 968 870 850 853 670 683 612Z"
            fill="#919192"
          />
          <path d="M870 850L885 852 893 820 943 834 922 868 1067 917M1040 982L1093 858" fill="none" />
          <path d="M938 1530h14l5 20h-12zM980 1622l12 6 4 17-12-2z" fill="#3b3b3b" />
          <!-- selected plate -->
          <path
            d="M135 465L525 390 560 342 580 338 592 346 598 408 660 405 670 535 710 523 715 573 675 578 683 612 533 728 548 908 520 928 540 940 546 960 510 985 490 972 470 985 440 1010 405 1025 375 1045 335 1000 287 1050 258 1035 262 968 38 680 62 628 75 626 132 657 180 540 118 526 115 515Z"
            fill="#639e9f"
            stroke="#4fd0cf"
          />
          <path d="M38 680L262 968 258 1035 287 1050" fill="none" />
          <g fill="#8f9091" stroke="none">
            <path d="M283 440h48v46h-48zM475 438h47v47h-47zM331 486h47v48h-47zM235 630h47v47h-47z" />
          </g>
          <!-- channel and lower fin -->
          <path d="M1045 1050L1090 1105 1033 1230 965 1237Z" fill="#5d5d5f" />
          <path d="M1045 1050L1108 1020 1122 1092 1090 1105Z" fill="#505050" />
          <path d="M1108 1014L1147 1058V1070L1122 1092Z" fill="#484848" />
          <path d="M965 1237L1052 1231 1175 1292 1215 1320 1130 1318Z" fill="#4b4b4b" />
          <path d="M985 1237L1005 1235 1130 1292 1130 1312Z" fill="#dcdcdc" />
          <path d="M1130 1292H1175L1195 1313 1130 1312Z" fill="#bdbdbd" />
          <path d="M1130 1325L1205 1317 1215 1332 1075 1755 1007 1700Z" fill="#717171" />
          <path d="M1122 1325L1005 1695M1134 1330L1012 1702" fill="none" stroke-width="2" />
          <path d="M1128 1327L1009 1698" fill="none" stroke="#c0c0c0" stroke-width="3" />
          <path d="M1134 1328L1215 1333" fill="none" />
          <path d="M1007 1700L1020 1725 1068 1767 1075 1752Z" fill="#4e4e4e" />
          <!-- pin holes -->
          {#each holes as [x, y]}
            <circle cx={x} cy={y} r="32" fill="#8b8b8c" stroke-width="3" />
            <circle cx={x} cy={y} r="28" fill="#4a4a4b" stroke="none" />
            <circle cx={x + 4} cy={y + 5} r="24" fill="#919192" stroke-width="3" />
          {/each}
          {#each pickedHoles as [x, y]}
            <circle cx={x} cy={y} r="28" fill="#3f4647" stroke-width="3" />
            <circle cx={x + 4} cy={y + 3} r="24" fill="#989496" stroke-width="2" />
          {/each}
          <path d="M337 652V704L349 694 358 711 366 706 358 690 375 689Z" fill="#fff" stroke="#555" />
        </g>
      </svg>
      <p class="insert-mode">Insert Mode</p>
    </section>
  </main>

  <footer>
    <div class="left">
      <div class="messages">
        <p>{@render icon("arrow")}Select a simplified representation name.</p>
        <p>
          {@render icon("warn")}The model component is now an accessory component that is no longer connected. As a result, Creo has updated
          the parent component. Reopen the model to avoid this message in the future.
        </p>
      </div>
      <div class="status">
        <button type="button" class="pressed" aria-label="Navigator">{@render icon("treeTab")}</button>
        <button type="button" aria-label="Browser">{@render icon("globe")}</button>
        <button type="button" aria-label="Full screen">{@render icon("blank")}</button>
        <output>Surf:F941(EXTRUDE_400):XXX_-_SGA_B_2 ID=199777</output>
      </div>
    </div>
    <div class="pickers">
      <div class="find">
        <button type="button" aria-label="Find">{@render icon("binoc")}</button>
        <button type="button" class="drop" aria-label="Find options">{@render caret()}</button>
      </div>
      <button type="button" class="boxed" aria-label="Selection buffer">{@render icon("box3d")}</button>
      <div class="select">
        <select aria-label="Selection filter">
          <option>Geometry</option>
        </select>
        {@render caret()}
      </div>
    </div>
  </footer>
</div>

<style>
  :global(body) {
    margin: 0;
    overflow: hidden;
  }
  .window {
    display: grid;
    grid-template-rows: 30px 27px auto 1fr 48px;
    height: 100vh;
    overflow: hidden;
    font: 13px/17px "Open Sans", "Noto Sans", sans-serif;
    color: #444;
    background: #e3e3e3;
  }
  button {
    display: flex;
    align-items: center;
    justify-content: center;
    margin: 0;
    padding: 0;
    border: 0;
    background: none;
    color: inherit;
    font: inherit;
    cursor: pointer;
  }
  .ico {
    flex: none;
    width: 16px;
    height: 16px;
  }
  .caret {
    flex: none;
    display: inline-block;
    border: 4px solid transparent;
    border-top-color: #555;
    border-bottom: 0;
  }
  .off {
    color: #aaa;
  }
  .off .caret {
    border-top-color: #aaa;
  }

  .titlebar {
    display: grid;
    grid-template-columns: 1fr auto 1fr;
    align-items: center;
    padding-bottom: 5px;
  }
  .quick {
    display: flex;
    align-items: center;
    height: 24px;
  }
  .logo {
    display: flex;
    padding: 3px 12px 3px 8px;
    border-right: 1px solid #bbb;
  }
  .quick button {
    gap: 7px;
    width: 24px;
  }
  .quick button.menu {
    width: 37px;
  }
  .quick .logo + button {
    width: 29px;
  }
  .quick button.more {
    height: 24px;
    border-left: 1px solid #bbb;
  }
  h1 {
    margin: 0;
    font-size: 15px;
    font-weight: 400;
    color: #333;
  }
  .win-buttons {
    display: flex;
    justify-content: flex-end;
    gap: 11px;
    padding-right: 2px;
  }

  .tabs {
    display: flex;
    border-bottom: 1px solid #c9c9c9;
  }
  .tabs > button {
    padding: 0 20px 2px;
    border-right: 1px solid #e3e3e3;
    background: #cfcfd1;
    color: #585858;
    font-size: 15px;
  }
  .tabs > .file {
    padding: 0 22px 2px;
    border-right: 0;
    background: #5f5f5f;
    color: #e6e6e6;
  }
  .tabs > .active {
    height: 28px;
    padding: 0 21px 2px;
    border-top: 1px solid #b5b5b7;
    background: #f8f8fa;
    color: #222;
  }
  .helpers {
    display: flex;
    flex: 1;
    align-items: center;
    justify-content: flex-end;
    gap: 7px;
    margin-right: -3px;
    padding-bottom: 2px;
  }
  .helpers .learn {
    gap: 7px;
    padding-right: 1px;
  }

  .ribbon {
    display: flex;
    height: 112px;
    border-bottom: 1px solid #7fa6c8;
    background: linear-gradient(#f8f8fa 87px, #eeeff1 87px);
  }
  .group {
    display: flex;
    flex-direction: column;
    border-right: 1px solid #bcbcc0;
  }
  .body {
    display: grid;
    flex: none;
    height: 87px;
  }
  .group-name {
    flex: 1;
    gap: 4px;
    padding-top: 1px;
  }
  .operations .body { grid-template-columns: 72px 43px; }
  .get-data .body { grid-template-columns: 72px; }
  .component .body { grid-template-columns: 70px 142px 89px; }
  .datum .body { grid-template-columns: 46px 132px 51px; }
  .cut .body { grid-template-columns: 101px; }
  .modifiers .body { grid-template-columns: 77px; }
  .model-display .body { grid-template-columns: 62px 44px 88px 112px 52px 72px; padding-right: 4px; }
  .intent .body { grid-template-columns: 82px 58px 52px 23px; }
  .investigate .body { grid-template-columns: 68px 62px; padding-right: 4px; }
  .big {
    flex-direction: column;
    justify-content: flex-start;
    padding-top: 6px;
    white-space: nowrap;
  }
  .big svg {
    width: 32px;
    height: 32px;
    margin-bottom: 10px;
  }
  .big span {
    display: flex;
    align-items: center;
    gap: 4px;
    height: 17px;
  }
  .big.ruled {
    position: relative;
  }
  .big.ruled::before {
    content: "";
    position: absolute;
    top: 8px;
    bottom: 8px;
    left: 0;
    border-left: 1px solid #e2e2e4;
  }
  .list {
    display: grid;
    grid-template-rows: repeat(3, 28px);
    padding: 1px 0 2px;
  }
  .small {
    justify-content: flex-start;
    gap: 4px;
    white-space: nowrap;
  }
  .operations .small { padding-left: 6px; gap: 7px; }
  .get-data .small { padding-left: 28px; }
  .component .small { padding-left: 1px; }
  .cut .small { padding-left: 18px; }
  .model-display .small { padding-left: 3px; }

  main {
    display: grid;
    grid-template-columns: 342px 1fr;
    min-height: 0;
  }
  aside {
    display: flex;
    flex-direction: column;
    min-height: 0;
    border-right: 2px solid #a9bccb;
    background: #eeeff1;
  }
  .side-tabs {
    display: grid;
    grid-template-columns: 103px 108px 92px 36px;
    height: 30px;
    border-top: 1px solid #a0a0a2;
    box-sizing: border-box;
  }
  .side-tabs button {
    gap: 5px;
    border: 1px solid #a8a8aa;
    border-width: 0 1px 1px 0;
    background: #d6d6d8;
    color: #808080;
    white-space: nowrap;
  }
  .side-tabs .active {
    border-bottom-color: transparent;
    background: #eeeff1;
    color: #444;
  }
  .side-head {
    display: flex;
    align-items: center;
    gap: 11px;
    height: 28px;
    padding: 0 10px 0 24px;
  }
  .side-head h2 {
    flex: 1;
    margin: 0;
    font-size: 13px;
    color: #333;
  }
  .side-head button {
    gap: 7px;
  }
  .side-head .ico {
    width: 20px;
    height: 20px;
  }
  .filter {
    display: flex;
    align-items: center;
    gap: 9px;
    height: 26px;
    padding: 0 11px 0 8px;
    margin-bottom: 4px;
  }
  .field {
    display: flex;
    flex: 1;
    height: 22px;
    border: 1px solid #b9b9bb;
    background: #fff;
  }
  .field input {
    flex: 1;
    min-width: 0;
    border: 0;
    outline: 0;
    font: inherit;
    background: none;
  }
  .tree {
    display: flex;
    flex: 1;
    flex-direction: column;
    min-height: 0;
    margin: 0 7px 5px 4px;
    border-bottom: 1px solid #fff;
    background: #fdfdfe;
  }
  .tree-clip {
    position: relative;
    flex: 1;
    min-height: 0;
    overflow: hidden;
  }
  table {
    width: 329px;
    border-collapse: collapse;
    table-layout: fixed;
    white-space: nowrap;
  }
  th {
    height: 18px;
    padding: 4px 0 0 8px;
    border-bottom: 1px solid #d4d4d6;
    border-right: 1px solid #dcdcde;
    text-align: left;
    font-weight: 400;
    color: #333;
    overflow: hidden;
    background: #f8f8fa;
  }
  th:first-child { width: 156px; }
  th:nth-child(2) { width: 111px; }
  th:last-child { padding-left: 6px; border-right: 0; }
  th .ico {
    width: 12px;
    height: 14px;
    margin-right: 2px;
    vertical-align: -2px;
  }
  td {
    height: 22px;
    padding: 0;
    overflow: hidden;
    border-right: 1px solid #ececee;
    font-size: 12px;
  }
  td:last-child {
    padding-left: 1px;
    border-right: 0;
  }
  .node {
    display: flex;
    align-items: center;
    padding-left: 10px;
  }
  .node.root {
    padding-left: 4px;
  }
  .node .ico {
    margin-right: 4px;
  }
  .expander {
    flex: none;
    width: 8px;
    height: 10px;
    margin-right: 6px;
    background: #8b8b8d;
    clip-path: polygon(0 0, 100% 50%, 0 100%);
  }
  .expander.leaf {
    visibility: hidden;
  }
  .mark {
    flex: none;
    width: 4px;
    height: 5px;
    margin: 0 2px 6px 0;
    background: #333;
  }
  .vscroll {
    position: absolute;
    top: 23px;
    right: 0;
    bottom: 0;
    display: flex;
    flex-direction: column;
    width: 13px;
    border: 1px solid #cacacc;
    background: #f8f8fa;
  }
  .thumb {
    background: #fafafb;
    border: 1px solid #cacacc;
  }
  .vscroll .thumb {
    flex: 1;
    border-width: 1px 0;
  }
  .track {
    flex: 1;
    background: #dedee0;
  }
  .vscroll .track {
    flex: 0 0 15px;
  }
  .arrow {
    flex: none;
    width: 13px;
    height: 13px;
  }
  .arrow::before {
    content: "";
    width: 7px;
    height: 4px;
    background: #8b8b8d;
    clip-path: polygon(50% 0, 100% 100%, 0 100%);
  }
  .arrow.down::before { clip-path: polygon(0 0, 100% 0, 50% 100%); }
  .arrow.left::before,
  .arrow.right::before { width: 4px; height: 7px; }
  .arrow.left::before { clip-path: polygon(100% 0, 100% 100%, 0 50%); }
  .arrow.right::before { clip-path: polygon(0 0, 100% 50%, 0 100%); }
  .hscrolls {
    display: flex;
    height: 15px;
    background: #f1f1f3;
  }
  .hscroll {
    display: flex;
    box-sizing: border-box;
    border: 1px solid #cacacc;
    background: #f8f8fa;
  }
  .hscroll .thumb { border-width: 0 1px; }
  .names { width: 165px; }
  .names .thumb { width: 104px; }
  .cols { width: 149px; }
  .cols .thumb { width: 26px; }

  .graphics {
    position: relative;
    min-width: 0;
    min-height: 0;
    background: linear-gradient(#0056a2, #003a76 45%, #001f4c 75%, #000e30);
  }
  .scene {
    display: block;
    width: 100%;
    height: 100%;
  }
  .view-tools {
    position: absolute;
    top: 7px;
    left: 38%;
    display: flex;
    height: 30px;
    padding: 0 6px 0 2px;
    border: 1px solid #c8d4de;
    background: #f8f8fa;
  }
  .view-tools button {
    width: 26px;
  }
  .view-tools .more {
    background: linear-gradient(135deg, transparent 50%, #444 50%) right 1px bottom 6px / 4px 4px no-repeat;
  }
  .insert-mode {
    position: absolute;
    left: 9px;
    bottom: 175px;
    margin: 0;
    color: #5b6f89;
    font: 13px/18px "Liberation Sans", sans-serif;
  }

  footer {
    display: grid;
    grid-template-columns: 1fr 434px;
    border-top: 2px solid #98989c;
    background: #eff0f2;
    overflow: hidden;
  }
  .left {
    min-width: 0;
  }
  .messages {
    height: 22px;
    padding: 7px 40px 0 88px;
    overflow: hidden;
    line-height: 16px;
    white-space: nowrap;
  }
  .messages p {
    display: flex;
    align-items: center;
    gap: 1px;
    margin: 0;
  }
  .messages .ico {
    width: 13px;
    height: 13px;
  }
  .status {
    display: flex;
    align-items: center;
    gap: 6px;
    height: 28px;
    padding-left: 2px;
  }
  .status button {
    width: 20px;
    height: 24px;
  }
  .status .pressed {
    border: 1px solid #b5b5b7;
    background: #dcdcde;
  }
  .status output {
    margin-left: 4px;
    padding-left: 14px;
    border-left: 1px solid #bdbdbf;
    line-height: 28px;
  }
  .pickers {
    display: flex;
    align-items: flex-start;
    height: 40px;
    margin-top: 24px;
    border-left: 1px solid #b3b3b5;
  }
  .find {
    display: flex;
    height: 34px;
    margin-left: 40px;
    padding: 2px 2px 0;
    border: 1px solid #b3b3b5;
    border-width: 0 1px;
  }
  .find button,
  .boxed {
    width: 27px;
    height: 26px;
    border: 1px solid #b3b3b5;
    background: #fafafb;
  }
  .find .drop {
    width: 15px;
    border-left: 0;
  }
  .boxed {
    width: 40px;
    margin: 2px 0 0 2px;
  }
  .boxed .ico {
    width: 18px;
    height: 18px;
  }
  .select {
    position: relative;
    width: 190px;
    margin: 3px 10px 0 auto;
  }
  .select select {
    width: 100%;
    height: 28px;
    padding: 0 8px;
    border: 1px solid #b3b3b5;
    border-radius: 0;
    appearance: none;
    background: linear-gradient(#b3b3b5, #b3b3b5) right 14px top / 1px 100% no-repeat, #fafafb;
    color: #555;
    font: inherit;
  }
  .select .caret {
    position: absolute;
    top: 12px;
    right: 4px;
  }
</style>
